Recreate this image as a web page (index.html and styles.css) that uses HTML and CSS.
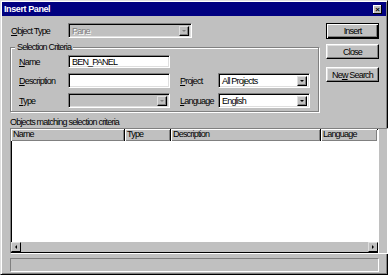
FILE: index.html
```html
<!DOCTYPE html>
<html lang="en">
<head>
  <meta charset="UTF-8" />
  <title>Insert Panel</title>
  <link rel="stylesheet" href="styles.css">
</head>
<body>
  <div class="window">
    <div class="titlebar">
      <span class="title">Insert Panel</span>
      <span class="close">&#215;</span>
    </div>

    <div class="content">
      <div class="top">
        <div class="left">
          <div class="object-row">
            <span class="label"><u>O</u>bject Type</span>
            <div class="combo sunken combo-object disabled">
              <span class="combo-text">Pane</span>
              <span class="drop"><span class="arrow"></span></span>
            </div>
          </div>

          <div class="group">
            <span class="legend">Selection Criteria</span>
            <div class="criteria">
              <span class="label"><u>N</u>ame</span>
              <div class="field sunken">BEN_PANEL</div>
              <span></span>
              <span></span>

              <span class="label"><u>D</u>escription</span>
              <div class="field sunken"></div>
              <span class="label label-right"><u>P</u>roject</span>
              <div class="combo sunken">
                <span class="combo-text">All Projects</span>
                <span class="drop"><span class="arrow"></span></span>
              </div>

              <span class="label"><u>T</u>ype</span>
              <div class="combo sunken disabled">
                <span class="combo-text"></span>
                <span class="drop"><span class="arrow"></span></span>
              </div>
              <span class="label label-right"><u>L</u>anguage</span>
              <div class="combo sunken">
                <span class="combo-text">English</span>
                <span class="drop"><span class="arrow"></span></span>
              </div>
            </div>
          </div>
        </div>

        <div class="buttons">
          <button class="btn btn-default">Insert</button>
          <button class="btn">Close</button>
          <button class="btn btn-search">Ne<u>w</u> Search</button>
        </div>
      </div>

      <div class="list-label">Objects matching selection criteria</div>

      <div class="list sunken">
        <div class="list-main">
          <div class="list-header">
            <span class="col col-name">Name</span>
            <span class="col col-type">Type</span>
            <span class="col col-desc">Description</span>
            <span class="col col-lang">Language</span>
          </div>
          <div class="list-body"></div>
          <div class="hscroll">
            <span class="sbtn"><span class="arrow-left"></span></span>
            <span class="track"></span>
            <span class="sbtn"><span class="arrow-right"></span></span>
          </div>
        </div>
        <div class="vscroll"></div>
      </div>

      <div class="status sunken-thin"></div>
    </div>
  </div>
</body>
</html>
```

FILE: styles.css
```css
body {
  margin: 0;
  background: #c0c0c0;
  font-family: "Liberation Sans", Arial, sans-serif;
  font-size: 9px;
  letter-spacing: -0.8px;
  color: #000;
}
.window {
  width: 388px;
  height: 275px;
  box-sizing: border-box;
  background: #c0c0c0;
  border: 1px solid;
  border-color: #dfdfdf #000 #000 #dfdfdf;
  box-shadow: inset 1px 1px #fff, inset -1px -1px #808080;
  padding: 1px;
  display: flex;
  flex-direction: column;
}
.titlebar {
  height: 14px;
  background: #000080;
  display: flex;
  align-items: center;
  justify-content: space-between;
  padding: 0 4px 0 2px;
}
.title {
  color: #fff;
  font-weight: bold;
  letter-spacing: -0.4px;
}
.close {
  width: 9px;
  height: 9px;
  background: #c0c0c0;
  box-shadow: inset -1px -1px #000, inset 1px 1px #fff;
  font-size: 8px;
  font-weight: bold;
  line-height: 9px;
  text-align: center;
  letter-spacing: 0;
}
.content {
  padding: 7px 0 0 8px;
  display: flex;
  flex-direction: column;
}
.top {
  display: flex;
}
.left {
  width: 309px;
}
.object-row {
  display: flex;
  align-items: center;
  height: 15px;
}
.object-row .label {
  width: 57px;
  padding-left: 1px;
}
.sunken {
  box-sizing: border-box;
  border: 1px solid;
  border-color: #808080 #fff #fff #808080;
  box-shadow: inset 1px 1px #000, inset -1px -1px #dfdfdf;
  background: #fff;
}
.sunken-thin {
  box-sizing: border-box;
  border: 1px solid;
  border-color: #808080 #fff #fff #808080;
}
.combo {
  display: flex;
  align-items: center;
  height: 15px;
  padding: 2px 2px 2px 3px;
}
.combo-object {
  width: 124px;
}
.combo-text {
  flex: 1;
  white-space: nowrap;
}
.combo.disabled {
  background: #c0c0c0;
}
.combo.disabled .combo-text {
  color: #808080;
  text-shadow: 1px 1px #fff;
}
.drop {
  width: 10px;
  height: 10px;
  background: #c0c0c0;
  box-sizing: border-box;
  border: 1px solid;
  border-color: #dfdfdf #000 #000 #dfdfdf;
  box-shadow: inset -1px -1px #808080;
  display: flex;
  align-items: center;
  justify-content: center;
}
.arrow {
  width: 0;
  height: 0;
  border-left: 2px solid transparent;
  border-right: 2px solid transparent;
  border-top: 2px solid #000;
}
.disabled .arrow {
  border-top-color: #808080;
}
.group {
  position: relative;
  margin-top: 9px;
  height: 65px;
  box-sizing: border-box;
  border: 1px solid #808080;
  box-shadow: inset 1px 1px #fff, 1px 1px #fff;
  padding: 7px 0 0 8px;
}
.legend {
  position: absolute;
  top: -6px;
  left: 4px;
  padding: 0 2px;
  background: #c0c0c0;
}
.criteria {
  display: grid;
  grid-template-columns: 49px 102px 48px 92px;
  grid-template-rows: 13px 15px 15px;
  row-gap: 5px;
  align-items: center;
}
.label-right {
  padding-left: 10px;
}
.criteria .field {
  height: 100%;
  padding: 1px 3px;
  line-height: 10px;
}
.buttons {
  margin-left: 7px;
  width: 53px;
  display: flex;
  flex-direction: column;
}
.btn {
  height: 15px;
  padding: 0;
  margin: 0 0 5px;
  background: #c0c0c0;
  color: #000;
  font: inherit;
  letter-spacing: inherit;
  border: 1px solid;
  border-color: #fff #000 #000 #fff;
  box-shadow: inset -1px -1px #808080, inset 1px 1px #dfdfdf;
}
.btn-default {
  height: 16px;
  border-color: #000;
  box-shadow: inset 1px 1px #fff, inset -1px -1px #000, inset -2px -2px #808080;
}
.btn-search {
  margin-top: 3px;
}
.list-label {
  margin-top: 4px;
  height: 12px;
  line-height: 12px;
}
.list {
  width: 378px;
  height: 126px;
  display: flex;
  background: #fff;
}
.list-main {
  flex: 1;
  display: flex;
  flex-direction: column;
}
.list-header {
  display: flex;
  height: 12px;
}
.col {
  box-sizing: border-box;
  height: 12px;
  line-height: 11px;
  padding-left: 2px;
  background: #c0c0c0;
  border-right: 1px solid #000;
  box-shadow: inset 1px 1px #fff, inset -1px -1px #808080;
}
.col-name { width: 114px; }
.col-type { width: 46px; }
.col-desc { width: 150px; }
.col-lang { width: 56px; border-right: none; }
.list-body {
  flex: 1;
}
.hscroll {
  height: 10px;
  display: flex;
  background: #c0c0c0;
  border-bottom: 1px solid #000;
}
.sbtn {
  width: 10px;
  box-sizing: border-box;
  border: 1px solid;
  border-color: #dfdfdf #000 #000 #dfdfdf;
  display: flex;
  align-items: center;
  justify-content: center;
  background: #c0c0c0;
}
.track {
  flex: 1;
}
.arrow-left {
  border-top: 2px solid transparent;
  border-bottom: 2px solid transparent;
  border-right: 2px solid #000;
}
.arrow-right {
  border-top: 2px solid transparent;
  border-bottom: 2px solid transparent;
  border-left: 2px solid #000;
}
.vscroll {
  width: 8px;
  background: #c0c0c0;
  border-left: 1px solid #fff;
}
.status {
  margin-top: 4px;
  width: 369px;
  height: 14px;
}
```
